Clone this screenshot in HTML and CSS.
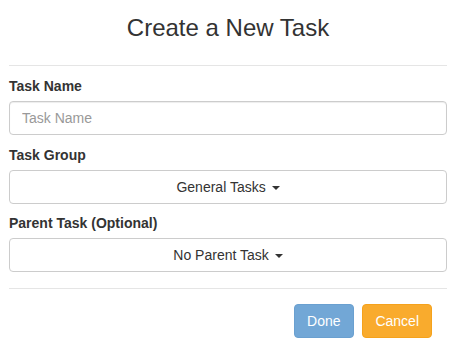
FILE: index.html
```html
<!DOCTYPE html>
<html lang="en">
<head>
    <meta charset="UTF-8">
    <meta name="viewport" content="width=device-width, initial-scale=1.0">
    <title>Create a New Task</title>
    <link rel="stylesheet" href="styles.css">
</head>
<body>
    <div class="task-modal">
        <div class="modal-header">
            <h1>Create a New Task</h1>
        </div>

        <form class="modal-body">
            <div class="form-group">
                <label for="taskName">Task Name</label>
                <input type="text" id="taskName" placeholder="Task Name">
            </div>
            <div class="form-group">
                <label>Task Group</label>
                <button type="button" class="dropdown-btn">General Tasks <span class="caret"></span></button>
            </div>
            <div class="form-group">
                <label>Parent Task (Optional)</label>
                <button type="button" class="dropdown-btn">No Parent Task <span class="caret"></span></button>
            </div>
        </form>

        <div class="modal-footer">
            <button type="button" class="btn btn-done" disabled>Done</button>
            <button type="button" class="btn btn-cancel">Cancel</button>
        </div>
    </div>
</body>
</html>
```

FILE: styles.css
```css
body {
    font-family: 'Liberation Sans', Arial, sans-serif;
    font-size: 14px;
    color: #333;
    margin: 0;
    background: white;
}

.task-modal {
    margin: 0 11px 0 9px;
}

.modal-header {
    padding: 15px 0 24px;
    border-bottom: 1px solid #e5e5e5;
    text-align: center;
}

h1 {
    margin: 0;
    font-size: 24px;
    font-weight: normal;
    line-height: 26px;
    color: #333;
}

.modal-body {
    padding: 10px 0 6.5px;
    border-bottom: 1px solid #e5e5e5;
}

.form-group {
    margin-bottom: 9.5px;
}

label {
    display: block;
    font-weight: bold;
    line-height: 20px;
    margin-bottom: 5px;
}

input[type="text"] {
    display: block;
    box-sizing: border-box;
    width: 100%;
    height: 34px;
    padding: 6px 12px;
    font: inherit;
    color: #555;
    border: 1px solid #ccc;
    border-radius: 4px;
    box-shadow: inset 0 1px 1px rgba(0, 0, 0, 0.075);
}

input::placeholder {
    color: #999;
}

.dropdown-btn {
    display: block;
    box-sizing: border-box;
    width: 100%;
    height: 34px;
    padding: 6px 12px;
    font: inherit;
    color: #333;
    background: white;
    border: 1px solid #ccc;
    border-radius: 4px;
    cursor: pointer;
}

.caret {
    display: inline-block;
    width: 0;
    height: 0;
    margin-left: 2px;
    vertical-align: middle;
    border-top: 4px solid #333;
    border-left: 4px solid transparent;
    border-right: 4px solid transparent;
}

.modal-footer {
    padding: 15px 15px;
    text-align: right;
}

.btn {
    box-sizing: border-box;
    height: 34px;
    padding: 6px 12px;
    font: inherit;
    line-height: 20px;
    color: white;
    border: 1px solid transparent;
    border-radius: 4px;
    cursor: pointer;
}

.btn + .btn {
    margin-left: 5px;
}

.btn-done {
    background-color: #72a7d6;
    border-color: #6aa0d0;
    cursor: not-allowed;
}

.btn-cancel {
    background-color: #f9ab2d;
    border-color: #f5a21c;
}
```
